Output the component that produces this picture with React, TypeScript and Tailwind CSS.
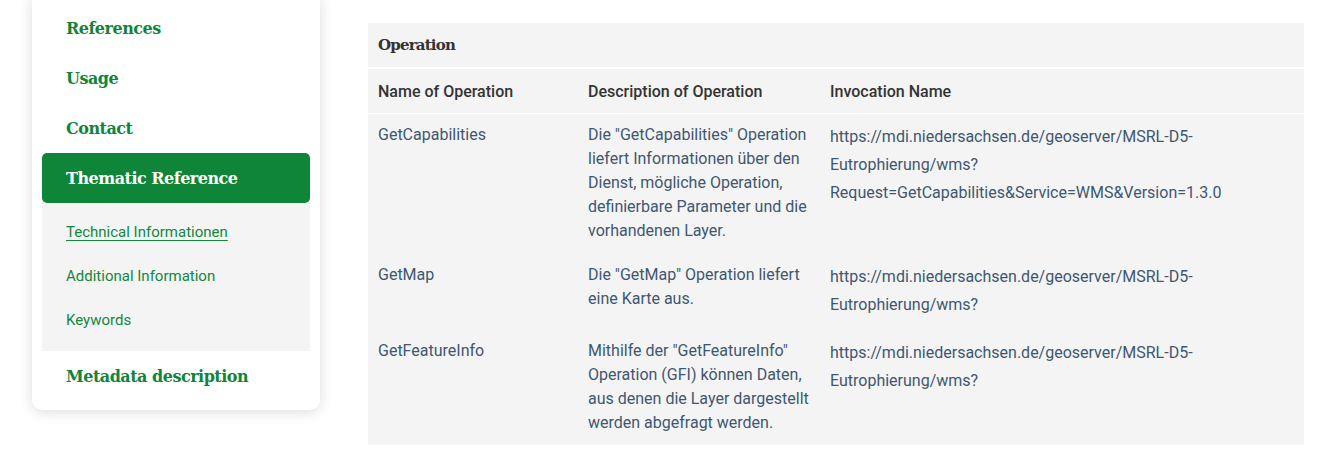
import React from "react";

const slab = { fontFamily: '"DejaVu Serif", "Liberation Serif", serif' };

const rows = [
  {
    name: "GetCapabilities",
    desc: 'Die "GetCapabilities" Operation liefert Informationen über den Dienst, mögliche Operation, definierbare Parameter und die vorhandenen Layer.',
    url: [
      "https://mdi.niedersachsen.de/geoserver/MSRL-D5-",
      "Eutrophierung/wms?",
      "Request=GetCapabilities&Service=WMS&Version=1.3.0",
    ],
  },
  {
    name: "GetMap",
    desc: 'Die "GetMap" Operation liefert eine Karte aus.',
    url: ["https://mdi.niedersachsen.de/geoserver/MSRL-D5-", "Eutrophierung/wms?"],
  },
  {
    name: "GetFeatureInfo",
    desc: 'Mithilfe der "GetFeatureInfo" Operation (GFI) können Daten, aus denen die Layer dargestellt werden abgefragt werden.',
    url: ["https://mdi.niedersachsen.de/geoserver/MSRL-D5-", "Eutrophierung/wms?"],
  },
];

export default function App() {
  return (
    <div
      className="w-[1344px] h-[459px] overflow-hidden bg-white flex items-start"
      style={{ fontFamily: 'Roboto, "Noto Sans", sans-serif' }}
    >
      <aside className="ml-[32px] w-[288px] -mt-[7px] bg-white rounded-[10px] shadow-[0_2px_14px_rgba(0,0,0,0.14)] px-[10px] pt-[10px] pb-[9px]">
        {["References", "Usage", "Contact"].map((t) => (
          <div
            key={t}
            className="h-[50px] flex items-center pt-[2px] pl-[24px] text-[16px] tracking-[-0.5px] font-bold text-[#0f8539]"
            style={slab}
          >
            {t}
          </div>
        ))}
        <div
          className="h-[50px] flex items-center pt-[2px] pl-[24px] text-[16px] tracking-[-0.5px] font-bold text-white bg-[#0e8538] rounded-[5px]"
          style={slab}
        >
          Thematic Reference
        </div>
        <div className="bg-[#f4f4f4] pt-[7px] pb-[9px]">
          {["Technical Informationen", "Additional Information", "Keywords"].map((t, i) => (
            <div key={t} className="h-[44px] flex items-center pl-[24px] text-[15px] text-[#12883c]">
              <span className={i === 0 ? "underline underline-offset-[3px]" : ""}>{t}</span>
            </div>
          ))}
        </div>
        <div
          className="h-[50px] flex items-center pt-[2px] pl-[24px] text-[16px] tracking-[-0.5px] font-bold text-[#0f8539]"
          style={slab}
        >
          Metadata description
        </div>
      </aside>

      <main className="ml-[48px] mt-[23px] w-[936px] bg-[#f4f4f4]">
        <div
          className="h-[46px] flex items-center pt-[1px] px-[10px] text-[15px] tracking-[-0.8px] font-bold text-[#333333] border-b-2 border-white"
          style={slab}
        >
          Operation
        </div>
        <div className="grid grid-cols-[210px_242px_1fr] h-[45px] items-center pt-[1px] border-b border-white text-[16px] font-medium text-[#333333]">
          <div className="px-[10px]">Name of Operation</div>
          <div className="px-[10px]">Description of Operation</div>
          <div className="px-[10px]">Invocation Name</div>
        </div>
        {rows.map((r, i) => (
          <div
            key={r.name}
            className={
              "grid grid-cols-[210px_242px_1fr] pb-[10px] text-[16px] text-[#3e5772] " +
              (i === 0 ? "pt-[9px]" : "pt-[10px]")
            }
          >
            <div className="px-[10px] leading-[24px]">{r.name}</div>
            <div className="px-[10px] leading-[24px]">{r.desc}</div>
            <div className="px-[10px] leading-[28px]">
              {r.url.map((u) => (
                <div key={u}>{u}</div>
              ))}
            </div>
          </div>
        ))}
      </main>
    </div>
  );
}
